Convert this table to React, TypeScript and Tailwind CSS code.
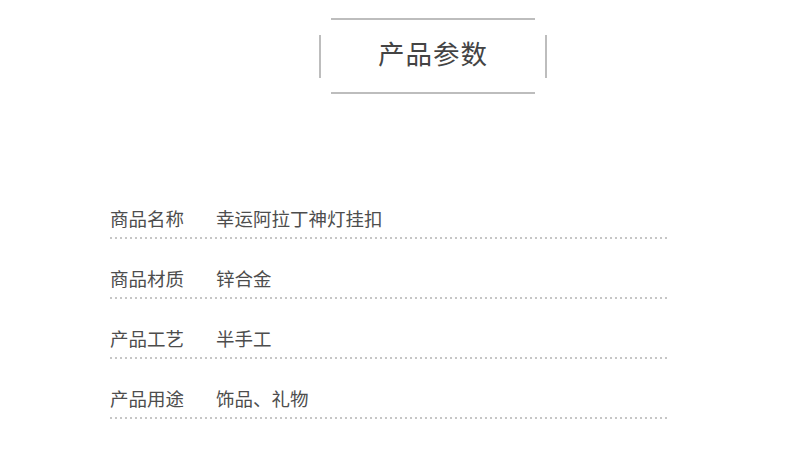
const ROWS: [string, string][] = [
  ['商品名称', '幸运阿拉丁神灯挂扣'],
  ['商品材质', '锌合金'],
  ['产品工艺', '半手工'],
  ['产品用途', '饰品、礼物'],
];

export default function App() {
  return (
    <div
      className="w-[800px] h-[467px] bg-white overflow-hidden"
      style={{ fontFamily: '"Noto Sans CJK SC", "Noto Sans", sans-serif' }}
    >
      {/* title frame */}
      <div className="ml-[319px] pt-[18px] w-[228px] flex flex-col">
        <div className="mx-[12px] h-[2px] bg-[#bdbdbd]" />
        <div className="mt-[15px] h-[43px] pb-[6px] border-l-2 border-r-2 border-[#bdbdbd] flex items-center justify-center">
          <span className="text-[26.5px] leading-none text-[#444] tracking-[1px]">产品参数</span>
        </div>
        <div className="mt-[14px] mx-[12px] h-[2px] bg-[#bdbdbd]" />
      </div>

      {/* params table */}
      <div className="ml-[110px] mt-[85px] w-[557px]">
        {ROWS.map(([label, value]) => (
          <div key={label} className="h-[60px] flex flex-col justify-end">
            <div className="flex pb-[7px] text-[18.5px] leading-[24px] text-[#4d4d4d]">
              <span className="w-[106px]">{label}</span>
              <span>{value}</span>
            </div>
            <div className="h-[2px] bg-[linear-gradient(to_right,#c6c6c6_2px,transparent_2px)] bg-[length:5px_2px]" />
          </div>
        ))}
      </div>
    </div>
  );
}
